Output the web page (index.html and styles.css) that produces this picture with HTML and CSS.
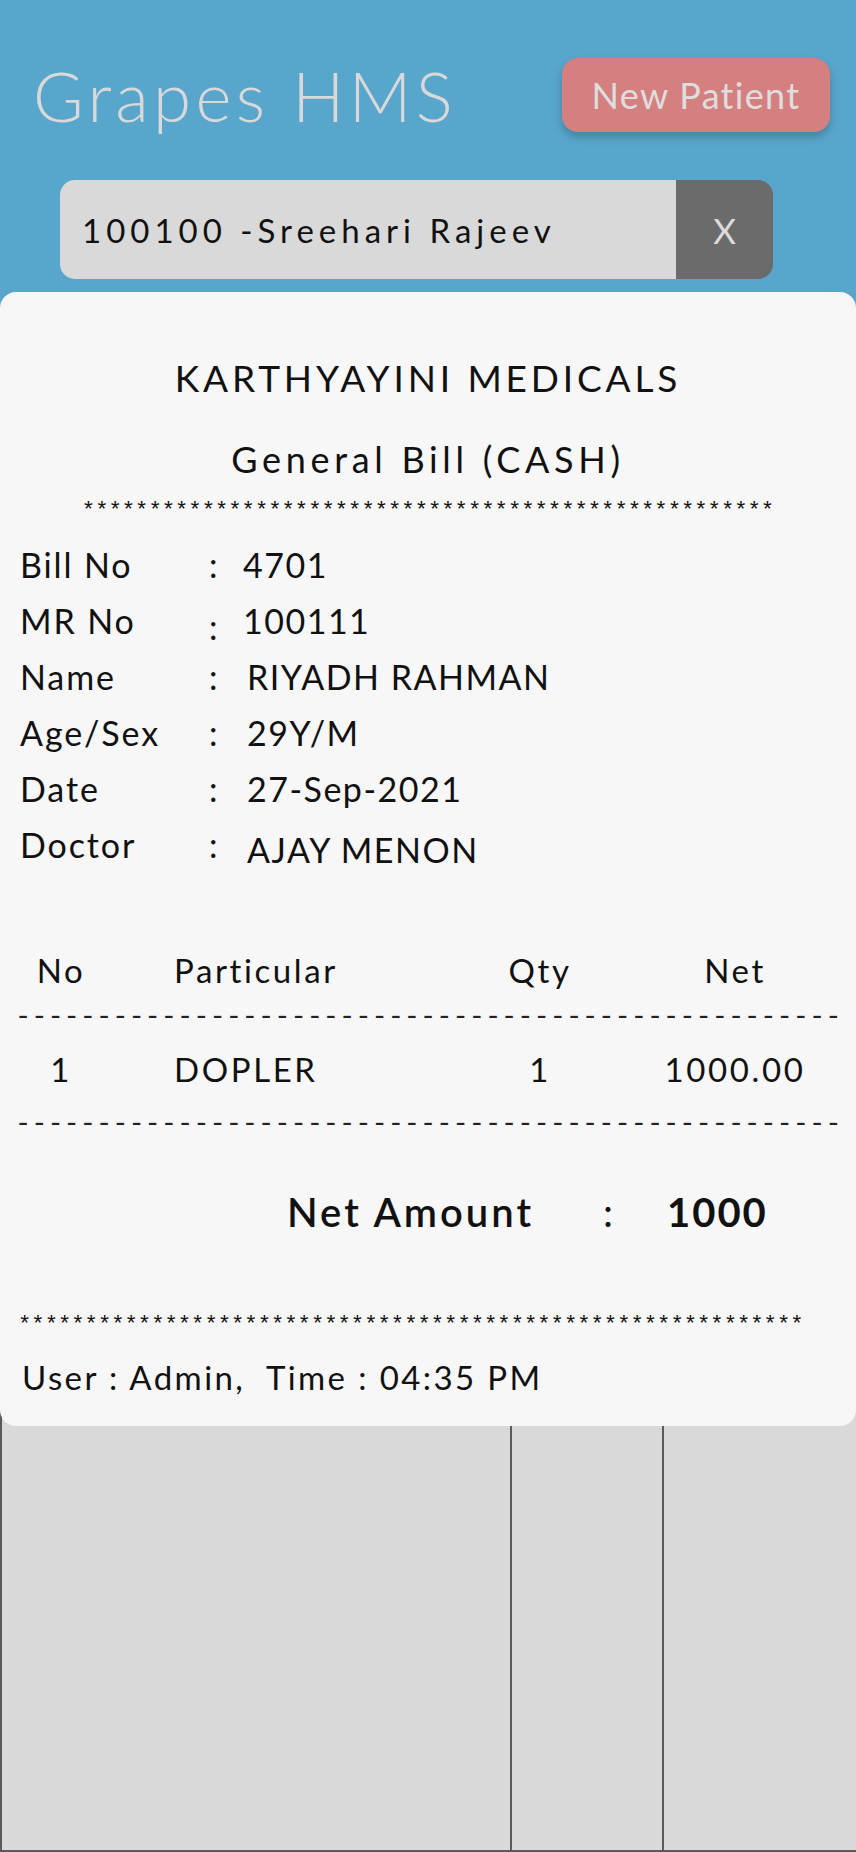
FILE: index.html
```html
<!DOCTYPE html>
<html lang="en">
<head>
<meta charset="utf-8">
<title>Grapes HMS</title>
<link rel="stylesheet" href="styles.css">
</head>
<body>
<div class="app">
  <header class="topbar">
    <div class="titlebar">
      <h1 class="brand">Grapes HMS</h1>
      <button class="new-patient">New Patient</button>
    </div>
    <div class="search">
      <span class="search-text">100100 -Sreehari Rajeev</span>
      <button class="search-clear">X</button>
    </div>
  </header>

  <section class="grid-area">
    <div class="grid-col col-a"></div>
    <div class="grid-col col-b"></div>
    <div class="grid-col col-c"></div>
  </section>

  <div class="receipt">
    <h2 class="org">KARTHYAYINI MEDICALS</h2>
    <h3 class="bill-type">General Bill (CASH)</h3>
    <div class="stars stars-top">****************************************************</div>

    <div class="details">
      <div class="d-label">Bill No</div><div class="d-colon">:</div><div class="d-value v-num">4701</div>
      <div class="d-label">MR No</div><div class="d-colon c-low">:</div><div class="d-value v-num">100111</div>
      <div class="d-label">Name</div><div class="d-colon">:</div><div class="d-value">RIYADH RAHMAN</div>
      <div class="d-label">Age/Sex</div><div class="d-colon">:</div><div class="d-value">29Y/M</div>
      <div class="d-label">Date</div><div class="d-colon">:</div><div class="d-value">27-Sep-2021</div>
      <div class="d-label">Doctor</div><div class="d-colon">:</div><div class="d-value v-low">AJAY MENON</div>
    </div>

    <div class="items items-head">
      <div class="c-no">No</div>
      <div class="c-part">Particular</div>
      <div class="c-qty">Qty</div>
      <div class="c-net">Net</div>
    </div>
    <div class="dashes dash-1">---------------------------------------------------</div>
    <div class="items items-row">
      <div class="c-no">1</div>
      <div class="c-part">DOPLER</div>
      <div class="c-qty">1</div>
      <div class="c-net">1000.00</div>
    </div>
    <div class="dashes dash-2">---------------------------------------------------</div>

    <div class="net">
      <div class="net-label">Net Amount</div>
      <div class="net-colon">:</div>
      <div class="net-value">1000</div>
    </div>

    <div class="stars stars-bottom">***********************************************************</div>
    <div class="footer-line">User : Admin,&nbsp; Time : 04:35 PM</div>
  </div>
</div>
</body>
</html>
```

FILE: styles.css
```css
* { box-sizing: border-box; }

html, body {
  margin: 0;
  padding: 0;
}

body {
  width: 856px;
  height: 1852px;
  font-family: Lato, "Open Sans", "Liberation Sans", sans-serif;
  color: #111;
  background: #d9d9d9;
  overflow: hidden;
}

.app {
  position: relative;
  width: 856px;
  height: 1852px;
  display: flex;
  flex-direction: column;
}

/* ---------- header ---------- */
.topbar {
  background: #58a6cc;
  height: 320px;
  flex: 0 0 auto;
  padding-top: 58px;
}

.titlebar {
  display: flex;
  align-items: center;
  justify-content: space-between;
  padding: 0 26px 0 33px;
  height: 74px;
}

.brand {
  margin: 0;
  font-size: 69px;
  line-height: 1;
  font-weight: 300;
  letter-spacing: 4.3px;
  color: #d9d9d9;
}

.new-patient {
  width: 268px;
  height: 74px;
  border: none;
  border-radius: 16px;
  background: #d58080;
  color: #dedede;
  font-family: inherit;
  font-size: 36px;
  letter-spacing: 1.3px;
  padding: 0;
  box-shadow: 0 5px 9px rgba(0, 0, 0, 0.22);
}

.search {
  margin: 48px 0 0 60px;
  width: 713px;
  height: 99px;
  display: flex;
  border-radius: 15px;
  overflow: hidden;
}

.search-text {
  flex: 1;
  background: #d9d9d9;
  display: flex;
  align-items: center;
  padding-left: 22px;
  font-size: 33px;
  letter-spacing: 5px;
  color: #111;
  white-space: nowrap;
}

.search-clear {
  width: 97px;
  border: none;
  background: #6b6b6b;
  color: #dcdcdc;
  font-family: inherit;
  font-size: 35px;
  padding: 0;
}

/* ---------- background table ---------- */
.grid-area {
  flex: 1;
  display: grid;
  grid-template-columns: 510px 152px 1fr;
  border-bottom: 2px solid #5a5a5a;
  background: #d9d9d9;
}

.grid-col {
  border-left: 2px solid #5a5a5a;
}

/* ---------- receipt overlay ---------- */
.receipt {
  position: absolute;
  top: 292px;
  left: 0;
  width: 856px;
  height: 1134px;
  background: #f7f7f7;
  border-radius: 16px;
  padding-top: 61px;
}

.org,
.bill-type {
  margin: 0;
  text-align: center;
  font-weight: 400;
  line-height: 50px;
  color: #111;
}

.org {
  font-size: 37px;
  letter-spacing: 3.85px;
}

.bill-type {
  margin-top: 31px;
  font-size: 36px;
  letter-spacing: 4.7px;
}

.stars {
  font-family: "Liberation Mono", "DejaVu Sans Mono", monospace;
  font-size: 22.2px;
  line-height: 28px;
  height: 28px;
  white-space: nowrap;
  color: #111;
}

.stars-top {
  margin-top: 14px;
  text-align: center;
}

.details {
  margin-top: 11px;
  display: grid;
  grid-template-columns: 189px 34px 1fr;
  grid-auto-rows: 56px;
  padding-left: 20px;
  font-size: 34px;
  line-height: 56px;
}

.d-label {
  letter-spacing: 1.9px;
}

.d-colon {
  letter-spacing: 0;
}

.c-low {
  position: relative;
  top: 6px;
}

.d-value {
  padding-left: 4px;
  letter-spacing: 1.5px;
}

.d-value.v-num {
  padding-left: 0;
}

.d-value.v-low {
  position: relative;
  top: 5px;
}

.items {
  display: grid;
  grid-template-columns: 88px 355px 160px 230px;
  padding-left: 17px;
  height: 56px;
  line-height: 56px;
  font-size: 33px;
  letter-spacing: 2.6px;
}

.items-head {
  margin-top: 69px;
}

.items-row {
  margin-top: 14px;
}

.c-no,
.c-qty,
.c-net {
  text-align: center;
}

.c-part {
  padding-left: 69px;
}

.dashes {
  font-family: "Liberation Mono", "DejaVu Sans Mono", monospace;
  font-size: 27px;
  height: 20px;
  line-height: 20px;
  padding-left: 15px;
  white-space: nowrap;
  color: #222;
}

.dash-1 { margin-top: 9px; }
.dash-2 { margin-top: 17px; }

.net {
  margin-top: 48px;
  display: grid;
  grid-template-columns: 316px 64px auto;
  padding-left: 287px;
  height: 60px;
  line-height: 60px;
  font-size: 40px;
}

.net-label {
  font-weight: 600;
  letter-spacing: 3px;
}

.net-value {
  font-weight: 700;
  letter-spacing: 2px;
}

.stars-bottom {
  margin-top: 70px;
  padding-left: 18px;
}

.footer-line {
  margin-top: 12px;
  padding-left: 22px;
  font-size: 33px;
  line-height: 50px;
  letter-spacing: 2.4px;
  white-space: pre;
}
```
